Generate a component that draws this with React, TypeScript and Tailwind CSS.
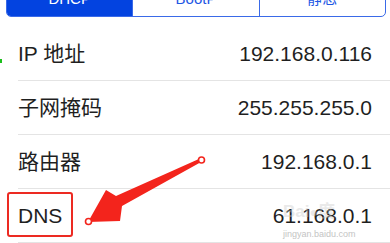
import React from "react";

const rows = [
  { label: "IP 地址", value: "192.168.0.116" },
  { label: "子网掩码", value: "255.255.255.0" },
  { label: "路由器", value: "192.168.0.1" },
  { label: "DNS", value: "61.168.0.1" },
];

export default function App() {
  return (
    <div
      className="relative w-[390px] h-[243px] overflow-hidden bg-white"
      style={{ fontFamily: '"Liberation Sans", "Noto Sans CJK SC", sans-serif' }}
    >
      {/* segmented control */}
      <div className="ml-[6px] -mt-[14px] flex h-[31px] w-[380px] overflow-hidden rounded-b-[5px] border-[1.5px] border-[#3a6ae8] text-[15px] leading-none">
        <div className="flex flex-1 items-center justify-center bg-[#0343e0] pb-[7px] text-white">DHCP</div>
        <div className="flex flex-1 items-center justify-center border-l-[1.5px] border-[#3a6ae8] pb-[7px] text-[#1e57e4]">BootP</div>
        <div className="flex flex-1 items-center justify-center border-l-[1.5px] border-[#3a6ae8] pb-[7px] text-[#1e57e4]">静态</div>
      </div>

      {/* list */}
      <div className="mt-[10px] pl-[18px]">
        {rows.map((r) => (
          <div
            key={r.label}
            className="flex h-[54px] items-center justify-between border-b border-[#e4e4e4] pr-[18px] text-[21px] text-[#1f1f1f]"
          >
            <span>{r.label}</span>
            <span>{r.value}</span>
          </div>
        ))}
      </div>

      {/* watermark */}
      <div className="pointer-events-none absolute left-[283px] top-[203px] text-[17px] font-bold leading-none text-[#c9c9c9] opacity-40">
        Bai<span className="text-[14px]">●</span>度
      </div>
      <div className="pointer-events-none absolute left-[283px] top-[230px] text-[9px] leading-none text-[#c4c4c4]">
        jingyan.baidu.com
      </div>

      {/* red box around DNS */}
      <div className="absolute left-[7px] top-[192px] h-[45px] w-[66px] rounded-[3px] border-2 border-[#ec2a22]" />

      {/* arrow */}
      <svg className="absolute left-0 top-0" width="390" height="243" viewBox="0 0 390 243">
        <polygon
          points="88,222 106,190 116,196 200,158.5 202,161.5 122,206 120,221"
          fill="#f3241c"
        />
        <circle cx="201.5" cy="160" r="3" fill="#fff" stroke="#f3241c" strokeWidth="1.6" />
        <circle cx="88.5" cy="221.5" r="3" fill="#fff" stroke="#f3241c" strokeWidth="1.6" />
      </svg>

      {/* green mark */}
      <div className="absolute left-0 top-[59px] h-[4px] w-[2px] bg-[#1cbf1c]" />
    </div>
  );
}
